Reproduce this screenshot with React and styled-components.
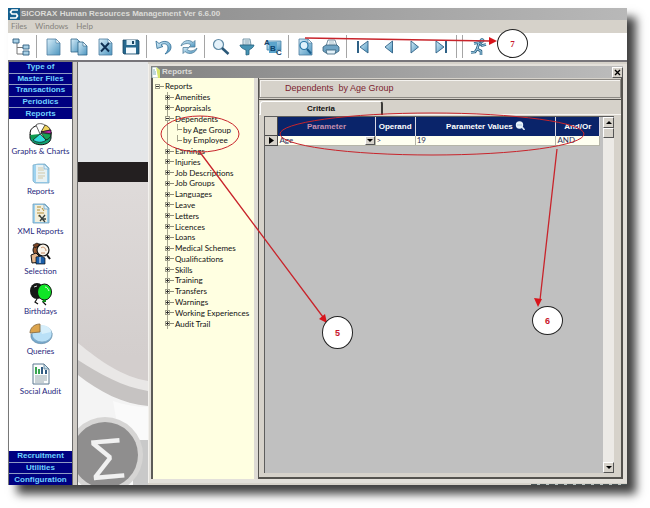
import React from "react";
import styled, { createGlobalStyle } from "styled-components";

const masterGroups = ["Type of", "Master Files", "Transactions", "Periodics", "Reports"];
const lowerGroups = ["Recruitment", "Utilities", "Configuration"];

const treeItems = [
  { label: "Reports", level: 0, open: true },
  { label: "Amenities", level: 1 },
  { label: "Appraisals", level: 1 },
  { label: "Dependents", level: 1, open: true },
  { label: "by Age Group", level: 2 },
  { label: "by Employee", level: 2 },
  { label: "Earnings", level: 1 },
  { label: "Injuries", level: 1 },
  { label: "Job Descriptions", level: 1 },
  { label: "Job Groups", level: 1 },
  { label: "Languages", level: 1 },
  { label: "Leave", level: 1 },
  { label: "Letters", level: 1 },
  { label: "Licences", level: 1 },
  { label: "Loans", level: 1 },
  { label: "Medical Schemes", level: 1 },
  { label: "Qualifications", level: 1 },
  { label: "Skills", level: 1 },
  { label: "Training", level: 1 },
  { label: "Transfers", level: 1 },
  { label: "Warnings", level: 1 },
  { label: "Working Experiences", level: 1 },
  { label: "Audit Trail", level: 1 },
];

/* ---------- Toolbar icons, all on an 18x18 grid ---------- */

const Icon = ({ children }) => (
  <svg width="18" height="18" viewBox="0 0 18 18" aria-hidden="true">{children}</svg>
);

const page = (x, y) => (
  <g transform={`translate(${x} ${y})`}>
    <path d="M0 0h9l4 4v12H0z" fill="url(#blue)" stroke="#4d7c9e" strokeWidth=".8" />
    <path d="M9 0v4h4z" fill="#f2f9fd" stroke="#4d7c9e" strokeWidth=".6" />
  </g>
);

const icons = {
  tree: (
    <Icon>
      <path d="M5 4v12h6M5 9.500h6" fill="none" stroke="#777" />
      <g fill="#a9d0e5" stroke="#2f5f80" strokeWidth=".9">
        <path d="M1 1h6v4H1zM11 7h6v4h-6zM11 13h6v4h-6z" />
      </g>
    </Icon>
  ),
  page: <Icon>{page(3, 1)}</Icon>,
  copy: (
    <Icon>
      <path d="M1 1h6l3 3v10H1z" fill="url(#blue)" stroke="#2f6488" strokeWidth=".8" />
      <path d="M8 4h5l4 4v9H8z" fill="url(#blue)" stroke="#2f6488" strokeWidth=".8" />
      <path d="M13 4v4h4z" fill="#eef8fd" stroke="#2f6488" strokeWidth=".6" />
    </Icon>
  ),
  remove: (
    <Icon>
      {page(3, 1)}
      <path d="M5 5l8 8.500M13 5l-8 8.500" stroke="#102f52" strokeWidth="1.900" />
    </Icon>
  ),
  save: (
    <Icon>
      <path d="M1 2h15l1 1v13H2l-1-1z" fill="#26688e" stroke="#174563" strokeWidth=".8" />
      <path d="M4.500 2h9v5h-9z" fill="#dceef7" />
      <path d="M10 3h2v3h-2z" fill="#174563" />
      <path d="M4 9.500h10v6H4z" fill="#f5fbff" />
    </Icon>
  ),
  undo: (
    <Icon>
      <path d="M2 3l1 7.500 6-2-2-1.500c3-2.500 7-1 7 3 0 2-1 4-3 6 4-1.500 6-4 6-7 0-5.500-7-7.500-12-3.500z" fill="url(#blue)" stroke="#2c6b94" strokeWidth=".8" />
    </Icon>
  ),
  refresh: (
    <Icon>
      <path d="M1 8c1-5 8-7.500 12-3.500l2-2v6.500H9l2-2C8 4.500 4 5.500 1 8z" fill="url(#blue)" stroke="#527f9c" strokeWidth=".8" />
      <path d="M17 10c-1 5-8 7.500-12 3.500l-2 2V9.500h6l-2 2c3 2.500 7 1.500 10-1.500z" fill="url(#blue)" stroke="#527f9c" strokeWidth=".8" />
    </Icon>
  ),
  search: (
    <Icon>
      <circle cx="6.500" cy="6.500" r="5" fill="#e5f2fa" stroke="#5f8aa5" strokeWidth="1.200" />
      <path d="M10 10l6.500 6" stroke="#2a5878" strokeWidth="2.600" />
    </Icon>
  ),
  filter: (
    <Icon>
      <path d="M5 1h7l1 6H5z" fill="#e6f3f8" stroke="#5a8296" strokeWidth=".8" />
      <path d="M6.500 3h5M6.500 5h5" stroke="#5a8296" strokeWidth=".7" />
      <path d="M2 7h14c0 2-3 4-5 5v4.500l-3 .5v-5C5 11 2 9 2 7z" fill="#4794b4" stroke="#24617d" strokeWidth=".8" />
    </Icon>
  ),
  sort: (
    <Icon>
      <path d="M3 3h14v9H3z" fill="url(#blue)" stroke="#4a83a7" strokeWidth=".8" />
      <path d="M5 4h8v11H5z" fill="#5ba4cc" />
      <g fontFamily="Liberation Sans, sans-serif" fontWeight="700" fill="#123f66">
        <text x="0" y="7" fontSize="8">A</text>
        <text x="6" y="13" fontSize="8" fill="#0b426d">B</text>
        <text x="12" y="17" fontSize="8">C</text>
      </g>
    </Icon>
  ),
  preview: (
    <Icon>
      {page(3, 1)}
      <circle cx="8" cy="7.500" r="4" fill="#dff2fc" stroke="#2878a8" strokeWidth="1.200" />
      <path d="M11 11l4 4.500" stroke="#1c5e8b" strokeWidth="2" />
    </Icon>
  ),
  print: (
    <Icon>
      <path d="M6 2h7l2 6H4z" fill="#f3f9fd" stroke="#56768a" strokeWidth=".8" />
      <path d="M7 4h5M7 6h6" stroke="#7797aa" strokeWidth=".6" />
      <path d="M1 9l3-2h11l2 2v4l-3 2H4l-3-2z" fill="#70a4c4" stroke="#335e79" strokeWidth=".8" />
      <path d="M4 12h10l-1 4H5z" fill="#e1f0f8" stroke="#335e79" strokeWidth=".8" />
    </Icon>
  ),
  first: (
    <Icon>
      <path d="M4 3v12" stroke="#2e6186" strokeWidth="2" />
      <path d="M14 3v12L6 9z" fill="url(#blue)" stroke="#2e6186" strokeWidth=".9" />
    </Icon>
  ),
  prev: <Icon><path d="M12.500 3v12L5 9z" fill="url(#blue)" stroke="#2e6186" strokeWidth=".9" /></Icon>,
  next: <Icon><path d="M5 3v12l7.500-6z" fill="url(#blue)" stroke="#2e6186" strokeWidth=".9" /></Icon>,
  last: (
    <Icon>
      <path d="M14 3v12" stroke="#2e6186" strokeWidth="2" />
      <path d="M4 3v12l8-6z" fill="url(#blue)" stroke="#2e6186" strokeWidth=".9" />
    </Icon>
  ),
  exit: (
    <Icon>
      <circle cx="12" cy="2.500" r="2" fill="#8fc1de" stroke="#2c6283" strokeWidth=".8" />
      <path d="M4 5.500l5-1 3 3 4-1M9 5l-2 6 4 2v4M7 11l-2 3-4 .5" fill="none" stroke="#2c6283" strokeWidth="2.600" strokeLinejoin="round" />
      <path d="M4 5.500l5-1 3 3 4-1M9 5l-2 6 4 2v4M7 11l-2 3-4 .5" fill="none" stroke="#9fcde6" strokeWidth="1" strokeLinejoin="round" />
    </Icon>
  ),
};

const toolGroups = [
  [["tree", "Navigator"]],
  [["page", "New"], ["copy", "Copy"], ["remove", "Delete"], ["save", "Save"]],
  [["undo", "Undo"], ["refresh", "Refresh"]],
  [["search", "Find"], ["filter", "Filter"], ["sort", "Sort"]],
  [["preview", "Preview"], ["print", "Print"]],
  [["first", "First"], ["prev", "Previous"], ["next", "Next"], ["last", "Last"]],
  [],
  [["exit", "Exit"]],
];

/* ---------- Sidebar icons, on a 24x24 grid ---------- */

const NavIcon = ({ children }) => (
  <svg width="24" height="24" viewBox="0 0 24 24" aria-hidden="true">{children}</svg>
);

const shortcuts = [
  {
    label: "Graphs & Charts",
    icon: (
      <NavIcon>
        <path d="M1 12v4c2 9 20 9 21 0v-6z" fill="#10a070" stroke="#111" />
        <ellipse cx="11.500" cy="11" rx="10.500" ry="8" fill="#fff" stroke="#111" />
        <path d="M11 12L1 13c2 7 9 7 11 6z" fill="#0f9c50" />
        <path d="M11 12L4 18c4 3 10 3 13 0z" fill="#33e0dc" stroke="#111" strokeWidth=".7" />
        <path d="M11 12l6-8c-3-3-8-3-10-1z" fill="#fff" stroke="#222" strokeWidth=".7" />
        <path d="M12 10l4-7c3 1 5 3 5 5z" fill="#efd35c" stroke="#111" strokeWidth=".7" />
        <path d="M12 10l10-2v4z" fill="#bb20a8" stroke="#111" strokeWidth=".7" />
        <path d="M12 11l10 1c0 3-2 5-5 6z" fill="#15a355" stroke="#111" strokeWidth=".7" />
      </NavIcon>
    ),
  },
  {
    label: "Reports",
    icon: (
      <NavIcon>
        <path d="M4 3l5-1h7l4 4v15H6l-2-2z" fill="#9fd3f0" stroke="#7eaec9" strokeWidth=".8" />
        <path d="M7 3h8l3 4v13H7z" fill="#e8f2f4" />
        <path d="M9 6h5M9 8h6M9 11h7M9 14h7M9 16h5" stroke="#d3c9a8" />
        <path d="M15 2v5h5z" fill="#d7effb" stroke="#7eaec9" strokeWidth=".7" />
      </NavIcon>
    ),
  },
  {
    label: "XML Reports",
    icon: (
      <NavIcon>
        <path d="M4 2h12l4 4v15H4z" fill="#9fd3f0" stroke="#6a9cb9" strokeWidth=".8" />
        <path d="M6 3h9l3 4v13H6z" fill="#f2efdd" />
        <path d="M8 5h4M8 8h3M13 6l2 3M8 11h7M9 14h3" stroke="#b28d35" />
        <path d="M10 13l6 7M16 13l-5 6M12 17h5" stroke="#37413e" strokeWidth="1.300" />
        <path d="M15 2v5h5z" fill="#d7effb" stroke="#6a9cb9" strokeWidth=".7" />
      </NavIcon>
    ),
  },
  {
    label: "Selection",
    icon: (
      <NavIcon>
        <circle cx="10" cy="8" r="6" fill="#9a5c34" stroke="#111" />
        <path d="M4 3l4-2 3 2-5 3z" fill="#7b4322" stroke="#111" strokeWidth=".7" />
        <circle cx="14" cy="8" r="6" fill="#f8f3e9" stroke="#111" strokeWidth="1.200" />
        <path d="M12 6c2-2 5 0 5 3M12 11h4" fill="none" stroke="#c48862" />
        <path d="M18 13l3 4" stroke="#111" strokeWidth="2" />
        <path d="M2 13l5-2 5 5 1 4-10 1z" fill="#e4b68d" stroke="#111" />
        <path d="M7 15l5-1 4 2v6H7z" fill="#1b5ea9" stroke="#111" strokeWidth=".7" />
        <path d="M11 15v6" stroke="#fff" />
      </NavIcon>
    ),
  },
  {
    label: "Birthdays",
    icon: (
      <NavIcon>
        <ellipse cx="8" cy="9" rx="7" ry="8" fill="#151815" />
        <path d="M5 5l3-1" stroke="#d8d8d8" />
        <path d="M8 17l-2 3 3 2M16 18l-2 2 3 3" fill="none" stroke="#111" strokeWidth="1.200" />
        <ellipse cx="15.500" cy="10" rx="7" ry="8" fill="#10e526" stroke="#111" />
        <path d="M16 5c2 0 3 2 4 4" fill="none" stroke="#d9ffd9" />
        <path d="M14 18h3v2h-4z" fill="#0d8617" />
      </NavIcon>
    ),
  },
  {
    label: "Queries",
    icon: (
      <NavIcon>
        <path d="M2 12v3c2 9 19 9 21-1v-3z" fill="#74a8cf" stroke="#648ba5" strokeWidth=".7" />
        <ellipse cx="13" cy="12" rx="10" ry="8" fill="#b9e0f7" stroke="#7ba4bd" strokeWidth=".7" />
        <path d="M13 12l-3-8c5-2 12 1 12 6z" fill="#d7effb" />
        <path d="M11 10L1 11c0-5 4-9 10-9z" fill="#dca44d" stroke="#80653c" strokeWidth=".8" />
      </NavIcon>
    ),
  },
  {
    label: "Social Audit",
    icon: (
      <NavIcon>
        <path d="M4 2h11l5 5v15H4z" fill="#fbfdfd" stroke="#5c7890" />
        <path d="M15 2v5h5z" fill="#c5dfec" stroke="#5c7890" strokeWidth=".8" />
        <path d="M7 5v7M10 7v5" stroke="#3aa651" strokeWidth="2" />
        <path d="M13 5v7M17 8v4" stroke="#315b82" strokeWidth="2" />
        <path d="M6 14h12M6 16h12M6 18h12M6 20h9" stroke="#97a6ad" />
      </NavIcon>
    ),
  },
];

const Backdrop = () => (
  <Scene viewBox="0 0 70 423" preserveAspectRatio="xMinYMax slice" aria-hidden="true">
    <rect width="70" height="101" fill="#e4e6e8" />
    <rect y="100" width="70" height="323" fill="url(#haze)" />
    <rect y="100" width="70" height="20" fill="#231f20" />
    <path d="M0 281c22 18 45 34 70 38v104H0z" fill="#e9e7e6" />
    <path d="M0 298c22 14 45 27 70 31v94H0z" fill="#c6c3c2" />
    <path d="M0 313c22 17 45 29 70 31v79H0z" fill="#f4f4f4" />
    <path d="M35 339c12 4 24 6 35 6v78H50z" fill="#fafafa" />
    <path d="M55 378h15v45H55z" fill="#c9c9c9" />
    <circle cx="27" cy="393" r="38" fill="#d6d5d4" />
    <circle cx="27" cy="393" r="33" fill="#8f8e8e" />
    <text x="11" y="417" fontSize="58" fontFamily="Liberation Sans, sans-serif" fill="#f1f1f1" transform="rotate(-5 30 396)">Σ</text>
  </Scene>
);

const TreeRow = ({ label, level, open }) => (
  <Row $level={level}>
    {level < 2 ? (
      <Toggle aria-label={`${open ? "Collapse" : "Expand"} ${label}`}>
        <svg width="5" height="5" viewBox="0 0 5 5">
          <path d={open ? "M1 2.500h3" : "M1 2.500h3M2.500 1v3"} stroke="#333" />
        </svg>
      </Toggle>
    ) : null}
    <Stub />
    <span>{label}</span>
  </Row>
);

const App = () => (
  <>
    <GlobalStyle />
    <Page>
      <Defs width="0" height="0" aria-hidden="true">
        <defs>
          <linearGradient id="blue" x1="0" y1="0" x2="1" y2="1">
            <stop offset="0" stopColor="#d8eef9" />
            <stop offset="1" stopColor="#4c95bf" />
          </linearGradient>
          <linearGradient id="haze" x1="0" y1="0" x2="0" y2="1">
            <stop offset="0" stopColor="#e0dcdb" />
            <stop offset=".6" stopColor="#d3cecd" />
          </linearGradient>
        </defs>
      </Defs>

      <Window>
        <TitleBar>
          <Logo viewBox="0 0 12 12" aria-hidden="true">
            <rect width="12" height="12" fill="#15608f" />
            <path d="M10 2H4L2.500 4 4 6h4.500L9.500 8 8 10H2" fill="none" stroke="#fff" strokeWidth="1.700" />
          </Logo>
          SICORAX Human Resources Management Ver 6.6.00
        </TitleBar>
        <MenuBar>
          <MenuButton>Files</MenuButton>
          <MenuButton>Windows</MenuButton>
          <MenuButton>Help</MenuButton>
        </MenuBar>
        <Toolbar>
          {toolGroups.map((group, i) => (
            <React.Fragment key={i}>
              {i > 0 && <Separator />}
              {group.map(([name, label]) => (
                <ToolButton key={name} aria-label={label}>{icons[name]}</ToolButton>
              ))}
            </React.Fragment>
          ))}
        </Toolbar>

        <Workspace>
          <Sidebar>
            <Groups $height={57}>
              {masterGroups.map((name) => <GroupButton key={name}>{name}</GroupButton>)}
            </Groups>
            <Shortcuts>
              {shortcuts.map(({ label, icon }) => (
                <Shortcut key={label}>{icon}{label}</Shortcut>
              ))}
            </Shortcuts>
            <Groups $height={34}>
              {lowerGroups.map((name) => <GroupButton key={name}>{name}</GroupButton>)}
            </Groups>
          </Sidebar>
          <Splitter />
          <Backdrop />

          <Dialog>
            <DialogTitle>
              <svg width="10" height="11" viewBox="0 0 10 11" aria-hidden="true">
                <path d="M1 0h5l3 3v8H1z" fill="#fff" stroke="#5c7f88" strokeWidth=".6" />
                <path d="M5 0l4 3v8H7z" fill="#d8e36c" />
                <path d="M2 3h2M2 5h3M2 7h3" stroke="#7fb0b8" />
              </svg>
              Reports
              <CloseButton aria-label="Close">
                <svg width="7" height="7" viewBox="0 0 7 7">
                  <path d="M1 1l5 5M6 1L1 6" stroke="#000" strokeWidth="1.400" />
                </svg>
              </CloseButton>
            </DialogTitle>
            <DialogBody>
              <TreePane>
                <Tree>
                  {treeItems.map((item) => <TreeRow key={item.label} {...item} />)}
                </Tree>
              </TreePane>
              <Detail>
                <Heading>Dependents&nbsp; by Age Group</Heading>
                <TabStrip>
                  <Tab role="tab" aria-selected="true">Criteria</Tab>
                </TabStrip>
                <TabPanel>
                  <GridArea>
                    <Grid>
                      <colgroup>
                        <col width="4%" />
                        <col width="29%" />
                        <col width="12%" />
                        <col width="42%" />
                        <col width="13%" />
                      </colgroup>
                      <thead>
                        <tr>
                          <CornerCell aria-label="Row marker" />
                          <HeadCell $muted>Parameter</HeadCell>
                          <HeadCell>Operand</HeadCell>
                          <HeadCell>
                            Parameter Values{" "}
                            <svg width="10" height="9" viewBox="0 0 10 9" aria-hidden="true">
                              <circle cx="4.500" cy="4" r="3.700" fill="#e9f3fa" />
                              <path d="M2 4h5" stroke="#a9c3dd" />
                              <path d="M7 6l2.500 3" stroke="#dbe6f2" strokeWidth="1.600" />
                            </svg>
                          </HeadCell>
                          <HeadCell>And/Or</HeadCell>
                        </tr>
                      </thead>
                      <tbody>
                        <tr>
                          <CornerCell as="td">
                            <svg width="5" height="7" viewBox="0 0 5 7"><path d="M0 0v7l5-3.500z" /></svg>
                          </CornerCell>
                          <Cell>
                            <SelectBox>
                              <Select aria-label="Parameter" defaultValue="Age">
                                <option>Age</option>
                              </Select>
                              <Arrow><Caret /></Arrow>
                            </SelectBox>
                          </Cell>
                          <Cell>&gt;</Cell>
                          <Cell><ValueInput aria-label="Parameter value" defaultValue="19" /></Cell>
                          <Cell>AND</Cell>
                        </tr>
                      </tbody>
                    </Grid>
                  </GridArea>
                  <ScrollBar>
                    <ScrollButton aria-label="Scroll up"><Caret $up /></ScrollButton>
                    <Thumb />
                    <ScrollButton aria-label="Scroll down"><Caret /></ScrollButton>
                  </ScrollBar>
                </TabPanel>
              </Detail>
            </DialogBody>
          </Dialog>
        </Workspace>
      </Window>

      {/* callouts lie over the whole window */}
      <Callouts width="650" height="508" viewBox="0 0 650 508" aria-hidden="true">
        <g fill="none" stroke="#c8242b">
          <ellipse cx="200" cy="134" rx="39" ry="18" />
          <ellipse cx="432" cy="134" rx="152" ry="21" />
          <path d="M199 151L323 317M557 149L540 300M305 38L490 41" strokeWidth="1.300" />
        </g>
        <g fill="#d8141b">
          <path d="M327 323l-8-4 6-5z" />
          <path d="M538 307l-4-9 8 1z" />
          <path d="M497 41l-8-4v8z" />
        </g>
      </Callouts>
      <Badge $x={322} $y={316} $h={33}>5</Badge>
      <Badge $x={532} $y={306} $h={29}>6</Badge>
      <Badge $x={497} $y={29} $h={29} $serif>7</Badge>
    </Page>
  </>
);

export default App;

// Styled Components
const GlobalStyle = createGlobalStyle`
  * {
    box-sizing: border-box;
  }

  body {
    margin: 0;
    background: #fff;
    font-family: Lato, "Liberation Sans", Arial, sans-serif;
    font-size: 8px;
    line-height: 10px;
    color: #111;
  }

  button, input, select {
    font: inherit;
    color: inherit;
    margin: 0;
    padding: 0;
    border: 0;
    background: none;
  }

  svg {
    flex: none;
  }
`;

const Page = styled.div`
  position: relative;
  min-height: 100vh;
  display: flex;
  padding: 8px 23px 23px 8px;
`;

const Defs = styled.svg`
  position: absolute;
`;

const Window = styled.main`
  flex: 1;
  min-width: 0;
  display: flex;
  flex-direction: column;
  background: #d6d2ca;
  box-shadow: 9px 9px 9px rgba(0, 0, 0, 0.75);
`;

const TitleBar = styled.header`
  display: flex;
  align-items: center;
  gap: 1px;
  height: 12px;
  background: linear-gradient(90deg, #828282, #b8b8b8);
  color: #dcdcd8;
  font: bold 8px/12px "Liberation Sans", Arial, sans-serif;
`;

const Logo = styled.svg`
  width: 12px;
  height: 12px;
`;

const MenuBar = styled.nav`
  display: flex;
  gap: 8px;
  height: 13px;
  padding-left: 3px;
  color: #85827c;
`;

const MenuButton = styled.button`
  line-height: 13px;
`;

const Toolbar = styled.div`
  display: flex;
  align-items: center;
  height: 29px;
  background: #fff;
  border-bottom: 2px solid #77757a;
`;

const ToolButton = styled.button`
  width: 18px;
  height: 18px;
  margin: 0 4px;

  svg {
    display: block;
  }
`;

const Separator = styled.span`
  width: 6px;
  height: 23px;
  background: linear-gradient(#a5a5a5, #a5a5a5) 2px 0 / 1px 100% no-repeat;
`;

/* a sliver of the product banner shows under the dialog */
const Workspace = styled.div`
  flex: 1;
  display: flex;
  background: repeating-linear-gradient(90deg, #4b5556 0 6px, #b9c4c2 6px 9px) 100% 100% / 96px 1px no-repeat;
`;

const Sidebar = styled.aside`
  width: 64px;
  display: flex;
  flex-direction: column;
  background: #fff;
  border-left: 1px solid #777;
`;

const Groups = styled.div`
  display: grid;
  grid-auto-rows: 1fr;
  gap: 1px;
  height: ${({ $height }) => $height}px;
  background: #8f9bc4;
`;

const GroupButton = styled.button`
  background: #000080;
  color: #6fd2ff;
  font: bold 8px/10px "Liberation Sans", Arial, sans-serif;
`;

const Shortcuts = styled.div`
  flex: 1;
  display: flex;
  flex-direction: column;
  padding-top: 2px;
`;

const Shortcut = styled.button`
  display: flex;
  flex-direction: column;
  align-items: center;
  height: 40px;
  padding-top: 1px;
  color: #27277c;
  white-space: nowrap;
`;

const Splitter = styled.div`
  width: 6px;
  background: #d0ccc6;
  border: solid #6b6b6b;
  border-width: 0 1px;
`;

const Scene = styled.svg`
  width: 70px;
  height: auto;
  align-self: stretch;
`;

const Dialog = styled.section`
  flex: 1;
  min-width: 0;
  display: flex;
  flex-direction: column;
  margin: 2px 0;
  padding: 2px 4px 4px 2px;
  background: #e3e0da;
  border-left: 1px solid #f3f1ed;
`;

const DialogTitle = styled.div`
  display: flex;
  align-items: center;
  gap: 1px;
  height: 12px;
  background: linear-gradient(90deg, #828282, #bcbcbc);
  color: #dcdcd8;
  font: bold 8px/12px "Liberation Sans", Arial, sans-serif;
`;

const CloseButton = styled.button`
  display: grid;
  place-items: center;
  width: 11px;
  height: 11px;
  margin-left: auto;
  background: #d6d2ca;
  border: 1px solid;
  border-color: #fff #555 #555 #fff;
`;

const DialogBody = styled.div`
  flex: 1;
  display: flex;
`;

const TreePane = styled.div`
  width: 107px;
  padding-top: 3px;
  background: #ffffe1;
  border-left: 2px solid #5c5b58;
  border-right: 4px solid #dedbd5;
`;

const Tree = styled.ul`
  display: grid;
  grid-auto-rows: 1fr;
  height: 248px;
  margin: 0;
  padding: 0;
  list-style: none;
`;

const Row = styled.li`
  display: flex;
  align-items: center;
  padding-left: ${({ $level }) => [2, 12, 25][$level]}px;
  background: ${({ $level }) =>
    $level === 0
      ? "none"
      : `linear-gradient(#a5a58e, #a5a58e) 14px 0 / 1px 100% no-repeat${
          $level === 2 ? ", linear-gradient(#a5a58e, #a5a58e) 24px 0 / 1px 60% no-repeat" : ""
        }`};
  white-space: nowrap;
`;

const Toggle = styled.button`
  width: 5px;
  height: 5px;
  background: #ffffe1;
  outline: 1px solid #a0a08c;
  outline-offset: -1px;

  svg {
    display: block;
  }
`;

const Stub = styled.span`
  width: 4px;
  height: 1px;
  margin-right: 1px;
  background: #8d8d7a;
`;

const Detail = styled.div`
  flex: 1;
  min-width: 0;
  display: flex;
  flex-direction: column;
  background: #d6d2ca;
  border: solid #55534f;
  border-width: 0 2px 2px 1px;
`;

const Heading = styled.h1`
  height: 19px;
  margin: 1px 0;
  padding-left: 25px;
  border: 1px solid #8d8a85;
  box-shadow: inset 1px 1px #f4f2ee;
  color: #7c2430;
  font: 9px/17px "Liberation Sans", Arial, sans-serif;
`;

const TabStrip = styled.div`
  display: flex;
  border-top: 1px solid #55534f;
  border-bottom: 1px solid #f6f4f0;
`;

const Tab = styled.button`
  width: 34%;
  height: 14px;
  margin: 1px 0 -1px 1px;
  background: #d6d2ca;
  border: solid;
  border-width: 1px 2px 0 1px;
  border-color: #fff #3b3a38 #fff #fff;
  border-radius: 3px 3px 0 0;
  color: #111;
  font: bold 8px/12px "Liberation Sans", Arial, sans-serif;
`;

const TabPanel = styled.div`
  flex: 1;
  display: flex;
  padding: 1px 7px 4px 5px;
`;

const GridArea = styled.div`
  flex: 1;
  min-width: 0;
  padding-right: 3px;
  background: #c0c0c0;
  border: solid #5d5d5d;
  border-width: 1px 0 0 1px;
`;

const Grid = styled.table`
  width: 100%;
  table-layout: fixed;
  border-collapse: separate;
  border-spacing: 0;
`;

const HeadCell = styled.th`
  height: 19px;
  padding: 0;
  background: #0a246a;
  border-right: 1px solid #d8d8e4;
  color: ${({ $muted }) => ($muted ? "#c68fae" : "#fff")};
  font: bold 8px/10px "Liberation Sans", Arial, sans-serif;
  white-space: nowrap;

  svg {
    vertical-align: -1px;
  }
`;

const CornerCell = styled.th`
  padding: 0;
  background: #d6d2ca;
  border: solid #4a4a4a;
  border-width: 0 1px 1px 0;
  line-height: 7px;
  text-align: center;
`;

const Cell = styled.td`
  height: 10px;
  padding: 0 0 0 1px;
  background: #fffff0;
  border: solid #b5b5a8;
  border-width: 0 1px 1px 0;
  color: #30305c;
  line-height: 9px;
`;

const SelectBox = styled.div`
  display: flex;
  align-items: center;
`;

const Select = styled.select`
  flex: 1;
  min-width: 0;
  height: 9px;
  appearance: none;
  line-height: 9px;
`;

const Arrow = styled.span`
  display: grid;
  place-items: center;
  width: 10px;
  height: 9px;
  background: #d6d2ca;
  border: 1px solid;
  border-color: #fff #555 #555 #fff;
`;

const Caret = styled.i`
  width: 0;
  height: 0;
  border: 3px solid transparent;
  border-width: ${({ $up }) => ($up ? "0 3px 3px" : "3px 3px 0")};
  border-top-color: ${({ $up }) => ($up ? "transparent" : "#000")};
  border-bottom-color: ${({ $up }) => ($up ? "#000" : "transparent")};
`;

const ValueInput = styled.input`
  display: block;
  width: 100%;
  height: 9px;
  line-height: 9px;
`;

const ScrollBar = styled.div`
  width: 11px;
  display: flex;
  flex-direction: column;
  background: #eceae6;
  border-top: 1px solid #5d5d5d;
`;

const ScrollButton = styled.button`
  display: grid;
  place-items: center;
  height: 11px;
  background: #d6d2ca;
  border: 1px solid;
  border-color: #fff #555 #555 #fff;

  &:last-child {
    margin-top: auto;
  }
`;

const Thumb = styled.div`
  height: 10px;
  background: #d6d2ca;
  border: 1px solid;
  border-color: #fff #555 #555 #fff;
`;

const Callouts = styled.svg`
  position: absolute;
  top: 0;
  left: 0;
  pointer-events: none;
`;

const Badge = styled.div`
  position: absolute;
  left: ${({ $x }) => $x}px;
  top: ${({ $y }) => $y}px;
  display: grid;
  place-items: center;
  width: 31px;
  height: ${({ $h }) => $h}px;
  background: #fff;
  border: 1px solid #222;
  border-radius: 50%;
  color: #c8142b;
  font: bold 9px/10px ${({ $serif }) => ($serif ? '"Liberation Serif", serif' : '"Liberation Sans", sans-serif')};
`;
